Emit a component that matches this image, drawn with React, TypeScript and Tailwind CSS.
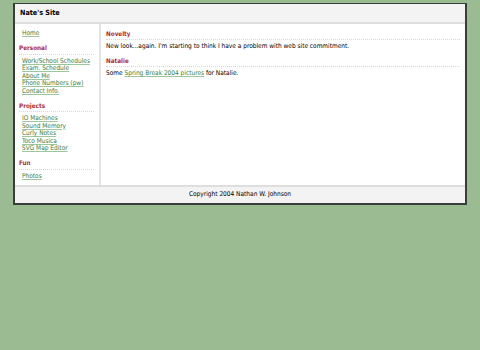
import React from "react";

const font = { fontFamily: '"DejaVu Sans Condensed", "DejaVu Sans", Verdana, sans-serif' };

function SideHeading({ children }: { children: React.ReactNode }) {
  return (
    <h2 className="mt-[6.5px] mb-[3px] pb-[1.5px] border-b border-dotted border-[#d8d8d8] text-[6.3px] font-bold text-[#b02c2c] leading-[8px]">
      {children}
    </h2>
  );
}

function Links({ items }: { items: string[] }) {
  return (
    <ul className="pl-[3px] leading-[7.5px]">
      {items.map((item) => (
        <li key={item}>
          <a href="#" className="text-[#3a7d3a] underline decoration-[#9cc79c]">
            {item}
          </a>
        </li>
      ))}
    </ul>
  );
}

function PostHeading({ children }: { children: React.ReactNode }) {
  return (
    <h3 className="pb-[0.5px] border-b border-dotted border-[#d8d8d8] text-[6.3px] font-bold text-[#b02c2c] leading-[8px]">
      {children}
    </h3>
  );
}

export default function App() {
  return (
    <div className="min-h-[350px] bg-[#9bbb93] pt-[3px]" style={font}>
      <div className="ml-[13px] w-[454px] border-2 border-t border-[#3c3c3c] bg-white text-[6.5px] text-black">
        {/* Header */}
        <header className="h-[20px] flex items-center px-[5px] bg-[#f3f3f3] border-b-2 border-[#dedede]">
          <h1 className="text-[7.2px] font-bold">Nate's Site</h1>
        </header>

        <div className="flex">
          {/* Sidebar */}
          <nav className="w-[86px] shrink-0 border-r-2 border-[#e4e4e4] pl-[4px] pr-[5px] pt-[6px] pb-[5px]">
            <Links items={["Home"]} />
            <SideHeading>Personal</SideHeading>
            <Links
              items={[
                "Work/School Schedules",
                "Exam. Schedule",
                "About Me",
                "Phone Numbers (pw)",
                "Contact Info.",
              ]}
            />
            <SideHeading>Projects</SideHeading>
            <Links
              items={["IO Machines", "Sound Memory", "Curly Notes", "Toco Musica", "SVG Map Editor"]}
            />
            <SideHeading>Fun</SideHeading>
            <Links items={["Photos"]} />
          </nav>

          {/* Content */}
          <main className="flex-1 pl-[5px] pr-[5px] pt-[6px]">
            <PostHeading>Novelty</PostHeading>
            <p className="mt-[2.5px] mb-[7px] leading-[8px]">
              New look...again. I'm starting to think I have a problem with web site commitment.
            </p>
            <PostHeading>Natalie</PostHeading>
            <p className="mt-[2.5px] leading-[8px]">
              Some{" "}
              <a href="#" className="text-[#3a7d3a] underline decoration-[#9cc79c]">
                Spring Break 2004 pictures
              </a>{" "}
              for Natalie.
            </p>
          </main>
        </div>

        {/* Footer */}
        <footer className="h-[18px] flex items-center justify-center bg-[#f3f3f3] border-t-2 border-[#dedede]">
          Copyright 2004 Nathan W. Johnson
        </footer>
      </div>
    </div>
  );
}
